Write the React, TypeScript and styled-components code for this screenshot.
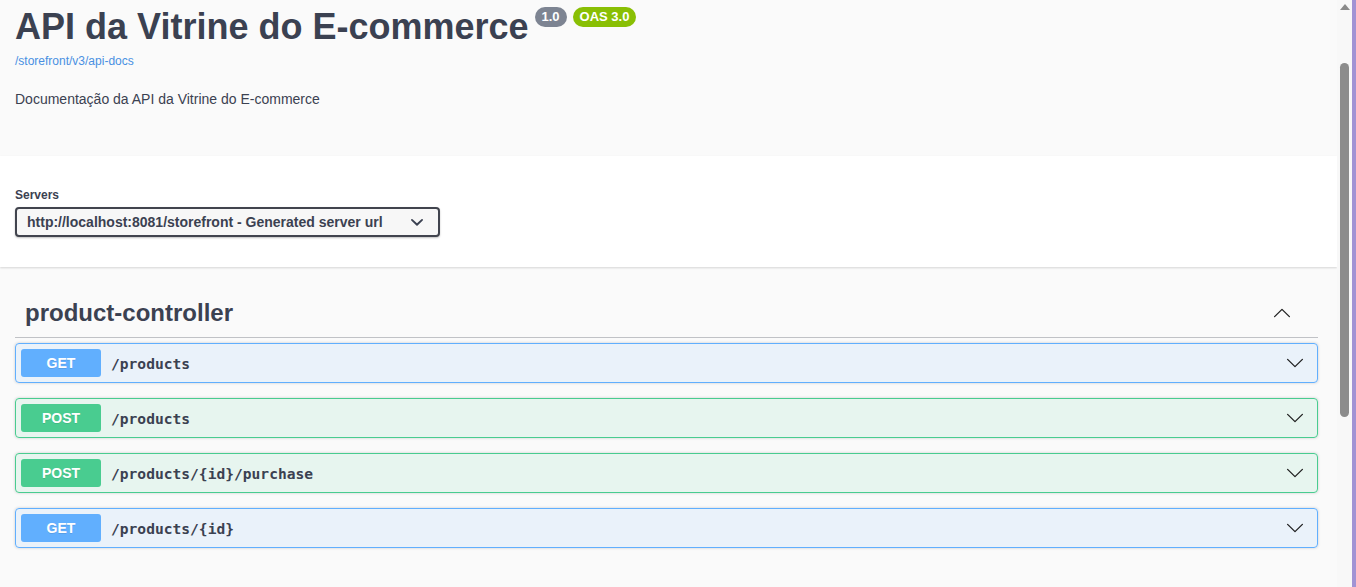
import React from 'react';
import styled, { createGlobalStyle } from 'styled-components';

/* ================================
              Types
================================ */
type Method = 'GET' | 'POST';

interface IOperation {
    method: Method,
    path: string,
}

/* ================================
              Data
================================ */
const operations: IOperation[] = [
    { method: 'GET', path: '/products' },
    { method: 'POST', path: '/products' },
    { method: 'POST', path: '/products/{id}/purchase' },
    { method: 'GET', path: '/products/{id}' },
];

const methodColors: Record<Method, string> = {
    GET: '97, 175, 254',
    POST: '73, 204, 144',
};

/* ================================
              Styles
================================ */
const GlobalStyle = createGlobalStyle`
    html, body {
        margin: 0;
        padding: 0;
        overflow: hidden;
        background: #fafafa;
    }
    * {
        box-sizing: border-box;
    }
`;

const Frame = styled.div`
    display: flex;
    width: 1356px;
    height: 587px;
    overflow: hidden;
    font-family: "Liberation Sans", Arial, sans-serif;
    color: #3b4151;
`;

const Page = styled.div`
    flex: 1;
    min-width: 0;
    background: #fafafa;
`;

const Wrapper = styled.div`
    padding: 0 19px 0 15px;
`;

const InfoSection = styled(Wrapper)`
    padding-top: 5px;
    height: 156px;
`;

const TitleRow = styled.div`
    display: flex;
    align-items: flex-start;
`;

const Title = styled.h2`
    margin: 0;
    font-size: 36px;
    line-height: 43px;
    font-weight: 700;
    color: #3b4151;
`;

const Badge = styled.span<{ tone: string }>`
    margin: 2px 0 0 6px;
    padding: 2px 7px;
    border-radius: 57px;
    background: ${(props) => props.tone};
    color: #fff;
    font-size: 13px;
    font-weight: 700;
    line-height: 16px;
`;

const SpecLink = styled.a`
    display: inline-block;
    margin-top: 6px;
    font-size: 12px;
    color: #4990e2;
    text-decoration: none;
`;

const Description = styled.p`
    margin: 22px 0 0;
    font-size: 14px;
    line-height: 16px;
    color: #3b4151;
`;

const SchemeContainer = styled.section`
    background: #fff;
    padding: 32px 0 30px;
    box-shadow: 0 1px 2px 0 rgba(0, 0, 0, 0.15);
    margin-bottom: 22px;
`;

const ServersLabel = styled.div`
    font-size: 12px;
    font-weight: 700;
    line-height: 14px;
    margin-bottom: 5px;
`;

const Select = styled.div`
    display: flex;
    align-items: center;
    justify-content: space-between;
    width: 425px;
    height: 30px;
    padding: 0 8px 0 10px;
    border: 2px solid #41444e;
    border-radius: 4px;
    background: #f7f7f7;
    box-shadow: 0 1px 2px 0 rgba(0, 0, 0, 0.25);
    font-size: 14px;
    font-weight: 700;
    color: #3b4151;
`;

const TagHeader = styled.h3`
    display: flex;
    align-items: center;
    justify-content: space-between;
    margin: 0 0 5px;
    padding: 10px 26px 10px 10px;
    border-bottom: 1px solid rgba(59, 65, 81, 0.3);
    font-size: 24px;
    font-weight: 700;
    line-height: 28px;
`;

const OpBlock = styled.div<{ rgb: string }>`
    display: flex;
    align-items: center;
    height: 40px;
    margin-bottom: 15px;
    padding: 0 12px 0 5px;
    border: 1px solid rgb(${(props) => props.rgb});
    border-radius: 4px;
    background: rgba(${(props) => props.rgb}, 0.1);
    box-shadow: 0 0 3px rgba(0, 0, 0, 0.19);
`;

const MethodBadge = styled.span<{ rgb: string }>`
    width: 80px;
    padding: 6px 0;
    border-radius: 3px;
    background: rgb(${(props) => props.rgb});
    color: #fff;
    font-size: 14px;
    font-weight: 700;
    line-height: 16px;
    text-align: center;
    text-shadow: 0 1px 0 rgba(0, 0, 0, 0.1);
`;

const OpPath = styled.span`
    flex: 1;
    margin-left: 10px;
    font-family: "DejaVu Sans Mono", "Liberation Mono", monospace;
    font-size: 14.6px;
    font-weight: 700;
    color: #3b4151;
`;

const Scrollbar = styled.div`
    width: 15px;
    height: 100%;
    background: #f8f8f8;
    display: flex;
    flex-direction: column;
    align-items: center;
`;

const ScrollArrow = styled.div`
    margin-top: 4px;
    width: 0;
    height: 0;
    border-left: 5px solid transparent;
    border-right: 5px solid transparent;
    border-bottom: 6px solid #8a8a8a;
`;

const ScrollThumb = styled.div`
    margin-top: 53px;
    width: 9px;
    height: 354px;
    border-radius: 5px;
    background: #8c8c8c;
`;

const WindowEdge = styled.div`
    width: 4px;
    height: 100%;
    background: #a193d4;
`;

/* ================================
              Icons
================================ */
function SmallChevron() {
    return (
        <svg width="26" height="26" viewBox="0 0 20 20" fill="#3b4151">
            <path d="M13.418 7.859a.695.695 0 01.978 0 .68.68 0 010 .969l-3.908 3.83a.697.697 0 01-.979 0l-3.908-3.83a.68.68 0 010-.969.695.695 0 01.978 0L10 11l3.418-3.141z" />
        </svg>
    );
}

function Arrow({ up }: { up?: boolean }) {
    return (
        <svg width="20" height="20" viewBox="0 0 20 20" style={up ? { transform: 'rotate(180deg)' } : undefined}>
            <path d="M2.6 6.4 L10 13.6 L17.4 6.4" fill="none" stroke="#1f1f1f" strokeWidth="1.3" strokeLinecap="round" strokeLinejoin="round" />
        </svg>
    );
}

/* ================================
              Main
================================ */
export default function App() {
    return (
        <Frame>
            <GlobalStyle />
            <Page>
                <InfoSection>
                    <TitleRow>
                        <Title>API da Vitrine do E-commerce</Title>
                        <Badge tone="#7d8492">1.0</Badge>
                        <Badge tone="#89bf04">OAS 3.0</Badge>
                    </TitleRow>
                    <SpecLink href="#">/storefront/v3/api-docs</SpecLink>
                    <Description>Documentação da API da Vitrine do E-commerce</Description>
                </InfoSection>

                <SchemeContainer>
                    <Wrapper>
                        <ServersLabel>Servers</ServersLabel>
                        <Select>
                            <span>http://localhost:8081/storefront - Generated server url</span>
                            <SmallChevron />
                        </Select>
                    </Wrapper>
                </SchemeContainer>

                <Wrapper>
                    <TagHeader>
                        <span>product-controller</span>
                        <Arrow up />
                    </TagHeader>
                    {operations.map((op) => (
                        <OpBlock key={op.method + op.path} rgb={methodColors[op.method]}>
                            <MethodBadge rgb={methodColors[op.method]}>{op.method}</MethodBadge>
                            <OpPath>{op.path}</OpPath>
                            <Arrow />
                        </OpBlock>
                    ))}
                </Wrapper>
            </Page>
            <Scrollbar>
                <ScrollArrow />
                <ScrollThumb />
            </Scrollbar>
            <WindowEdge />
        </Frame>
    );
}
